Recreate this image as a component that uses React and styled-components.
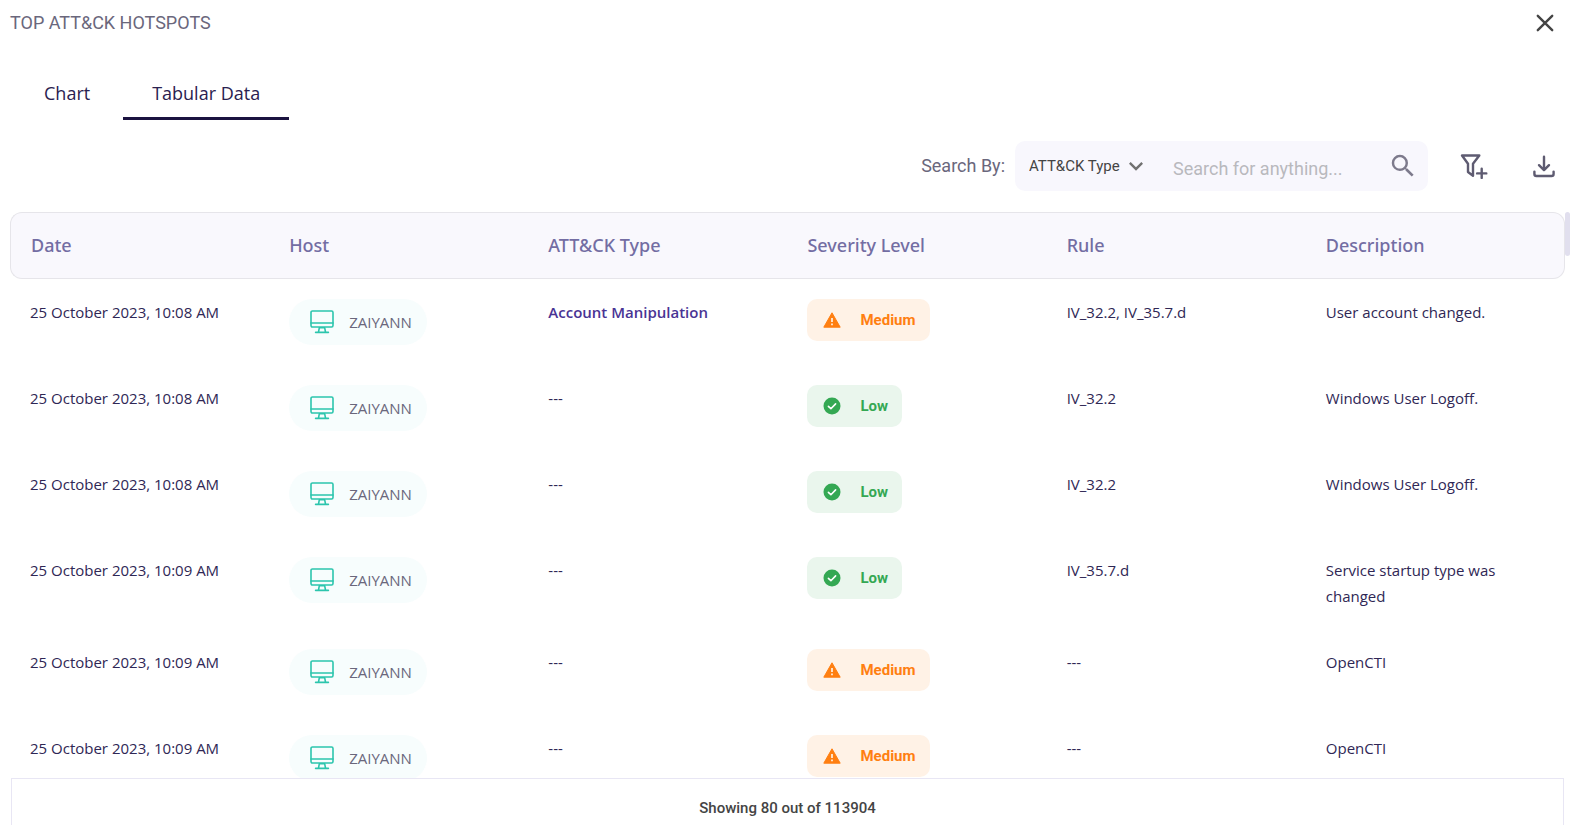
import React, { useState } from "react";
import styled, { createGlobalStyle } from "styled-components";
import { MdKeyboardArrowDown, MdSearch } from "react-icons/md";

const columns = [
  "Date",
  "Host",
  "ATT&CK Type",
  "Severity Level",
  "Rule",
  "Description",
];

const events = [
  {
    date: "25 October 2023, 10:08 AM",
    host: "ZAIYANN",
    type: "Account Manipulation",
    severity: "Medium",
    rule: "IV_32.2, IV_35.7.d",
    description: "User account changed.",
  },
  {
    date: "25 October 2023, 10:08 AM",
    host: "ZAIYANN",
    severity: "Low",
    rule: "IV_32.2",
    description: "Windows User Logoff.",
  },
  {
    date: "25 October 2023, 10:08 AM",
    host: "ZAIYANN",
    severity: "Low",
    rule: "IV_32.2",
    description: "Windows User Logoff.",
  },
  {
    date: "25 October 2023, 10:09 AM",
    host: "ZAIYANN",
    severity: "Low",
    rule: "IV_35.7.d",
    description: "Service startup type was changed",
  },
  {
    date: "25 October 2023, 10:09 AM",
    host: "ZAIYANN",
    severity: "Medium",
    description: "OpenCTI",
  },
  {
    date: "25 October 2023, 10:09 AM",
    host: "ZAIYANN",
    severity: "Medium",
    description: "OpenCTI",
  },
];

const CloseIcon = () => (
  <svg width="20" height="20" viewBox="0 0 20 20" fill="none" stroke="currentColor" strokeWidth="2.4" strokeLinecap="round">
    <path d="M2.8 2.8 17.2 17.2M17.2 2.8 2.8 17.2" />
  </svg>
);

const FilterAddIcon = () => (
  <svg width="28" height="26" viewBox="0 0 28 26" fill="none" stroke="currentColor" strokeWidth="2.4" strokeLinejoin="round">
    <path d="M2 2.5H19.3L13 10.8V22.8L8 19V10.8Z" />
    <path d="M21.7 15.8V25M17.1 20.4H26.3" strokeLinecap="round" />
  </svg>
);

const DownloadIcon = () => (
  <svg width="24" height="24" viewBox="0 0 24 24" fill="none" stroke="currentColor" strokeWidth="2.4" strokeLinecap="round" strokeLinejoin="round">
    <path d="M12 2.8V16M7 11.2 12 16.2 17 11.2" />
    <path d="M2.4 17.6V20Q2.4 22 4.4 22H19.6Q21.6 22 21.6 20V17.6" />
  </svg>
);

const MonitorIcon = () => (
  <svg width="24" height="24" viewBox="0 0 24 24" fill="none" stroke="#2cc5ad" strokeWidth="1.6" strokeLinecap="round" strokeLinejoin="round">
    <rect x="1" y="1" width="22" height="16" rx="1.4" />
    <path d="M1 13H23M9.3 17.8H14.7M9.3 17.8 8.5 22M14.7 17.8 15.5 22M5.6 22.4H18.4" />
  </svg>
);

const WarningIcon = () => (
  <svg width="18" height="18" viewBox="0 0 18 18">
    <path d="M9 1.8 17.2 16.2H.8Z" fill="#ff7f11" stroke="#ff7f11" strokeWidth="1" strokeLinejoin="round" />
    <path d="M9 7V11M9 12.4V14.2" stroke="#fff2e6" strokeWidth="1.7" />
  </svg>
);

const CheckIcon = () => (
  <svg width="18" height="18" viewBox="0 0 18 18">
    <circle cx="9" cy="9" r="8.5" fill="#34a853" />
    <path d="M5.4 9.3 7.9 11.7 12.6 6.9" fill="none" stroke="#fff" strokeWidth="1.6" strokeLinecap="round" strokeLinejoin="round" />
  </svg>
);

function App() {
  const [tab, setTab] = useState("Tabular Data");

  return (
    <>
      <GlobalStyle />
      <Panel>
        <PanelHeader>
          <h1>TOP ATT&amp;CK HOTSPOTS</h1>
          <CloseButton type="button" aria-label="Close">
            <CloseIcon />
          </CloseButton>
        </PanelHeader>

        <Tabs>
          {["Chart", "Tabular Data"].map((name) => (
            <Tab
              key={name}
              type="button"
              $active={tab === name}
              onClick={() => setTab(name)}
            >
              {name}
            </Tab>
          ))}
        </Tabs>

        <Toolbar>
          <SearchGroup>
            <label htmlFor="search-by">Search By:</label>
            <SearchBox>
              <SelectWrap>
                <select id="search-by" defaultValue="type">
                  <option value="type">ATT&amp;CK Type</option>
                </select>
                <MdKeyboardArrowDown size={28} />
              </SelectWrap>
              <SearchInput
                type="text"
                aria-label="Search"
                placeholder="Search for anything..."
              />
              <SearchButton type="button" aria-label="Search">
                <MdSearch size={30} />
              </SearchButton>
            </SearchBox>
          </SearchGroup>
          <ToolButton type="button" aria-label="Add filter">
            <FilterAddIcon />
          </ToolButton>
          <ToolButton type="button" aria-label="Download">
            <DownloadIcon />
          </ToolButton>
        </Toolbar>

        <TableArea>
          <Table>
            <thead>
              <tr>
                {columns.map((column) => (
                  <th key={column} scope="col">
                    {column}
                  </th>
                ))}
              </tr>
            </thead>
            <tbody>
              {events.map((event, index) => (
                <tr key={index}>
                  <td>{event.date}</td>
                  <td>
                    <HostPill>
                      <MonitorIcon />
                      {event.host}
                    </HostPill>
                  </td>
                  <td>
                    {event.type ? <AttackType>{event.type}</AttackType> : "---"}
                  </td>
                  <td>
                    <SeverityBadge $level={event.severity}>
                      {event.severity === "Low" ? <CheckIcon /> : <WarningIcon />}
                      {event.severity}
                    </SeverityBadge>
                  </td>
                  <td>{event.rule || "---"}</td>
                  <td>{event.description}</td>
                </tr>
              ))}
            </tbody>
          </Table>
          <ScrollThumb />
        </TableArea>

        <Footer>Showing 80 out of 113904</Footer>
      </Panel>
    </>
  );
}

const GlobalStyle = createGlobalStyle`
  * {
    box-sizing: border-box;
  }

  body {
    margin: 0;
    background: #fff;
    font-family: "Open Sans", sans-serif;
  }

  button {
    padding: 0;
    border: none;
    background: none;
    cursor: pointer;
  }
`;

const Panel = styled.main`
  display: flex;
  flex-direction: column;
  height: 100vh;
  overflow: hidden;
`;

const PanelHeader = styled.header`
  display: flex;
  align-items: center;
  justify-content: space-between;
  height: 46px;
  padding: 0 21px 0 10px;

  h1 {
    margin: 0;
    color: #6a677c;
    font: 400 18px/24px Roboto, sans-serif;
  }
`;

const CloseButton = styled.button`
  display: flex;
  color: #444;
`;

const Tabs = styled.nav`
  display: flex;
  gap: 4px;
  padding: 20px 15px 0;
`;

const Tab = styled.button`
  padding: 15px 29px 11px;
  border-bottom: 3px solid ${({ $active }) => ($active ? "#1b1340" : "transparent")};
  color: #2a2150;
  font: 400 18px/25px "Open Sans", sans-serif;
`;

const Toolbar = styled.div`
  display: flex;
  align-items: center;
  justify-content: flex-end;
  gap: 22px;
  padding: 21px 8px;
`;

const SearchGroup = styled.div`
  display: flex;
  align-items: center;
  gap: 10px;

  label {
    color: #6a677c;
    font: 400 18px/24px Roboto, sans-serif;
  }
`;

const SearchBox = styled.div`
  display: flex;
  align-items: center;
  width: 413px;
  height: 50px;
  padding: 0 10px 0 14px;
  border-radius: 10px;
  background: #f8f7fd;
`;

const SelectWrap = styled.div`
  display: flex;
  align-items: center;
  flex: none;
  width: 144px;

  select {
    appearance: none;
    width: 93px;
    padding: 0;
    border: none;
    outline: none;
    background: none;
    color: #444;
    font: 400 15px/24px Roboto, sans-serif;
  }

  svg {
    flex: none;
    color: #717171;
    pointer-events: none;
  }
`;

const SearchInput = styled.input`
  flex: 1;
  min-width: 0;
  padding: 6px 0 0;
  border: none;
  outline: none;
  background: none;
  color: #444;
  font: 400 18px/24px Roboto, sans-serif;

  &::placeholder {
    color: #b9b9bd;
  }
`;

const SearchButton = styled.button`
  display: flex;
  color: #7d7a8c;
`;

const ToolButton = styled.button`
  display: flex;
  align-items: center;
  justify-content: center;
  width: 48px;
  height: 48px;
  color: #5e5b71;
`;

const TableArea = styled.section`
  display: flex;
  align-items: flex-start;
  flex: 1;
  min-height: 0;
  padding: 0 6px 0 10px;
  overflow: hidden;
`;

const Table = styled.table`
  width: 100%;
  table-layout: fixed;
  border-collapse: separate;
  border-spacing: 0;

  th {
    height: 67px;
    padding: 0 20px 2px;
    border: 1px solid #e6e5ea;
    border-width: 1px 0;
    background: #f9f8fd;
    color: #736da3;
    font-family: "Noto Sans", sans-serif;
    font-size: 18px;
    font-weight: 500;
    text-align: left;
  }

  th:first-child {
    border-left-width: 1px;
    border-radius: 12px 0 0 12px;
  }

  th:last-child {
    border-right-width: 1px;
    border-radius: 0 12px 12px 0;
  }

  td {
    padding: 20px;
    color: #2f2755;
    font-size: 15px;
    line-height: 26px;
    vertical-align: top;
  }
`;

const HostPill = styled.div`
  display: flex;
  align-items: center;
  gap: 15px;
  width: fit-content;
  height: 46px;
  padding: 0 15px 0 21px;
  border-radius: 23px;
  background: #f7fdfd;
  color: #6a677c;
`;

const AttackType = styled.span`
  color: #493494;
  font-weight: 600;
`;

const SeverityBadge = styled.div`
  display: flex;
  align-items: center;
  gap: 19px;
  width: fit-content;
  height: 42px;
  padding: 0 14px 0 16px;
  border-radius: 10px;
  background: ${({ $level }) => ($level === "Low" ? "#eaf6ed" : "#fff2e6")};
  color: ${({ $level }) => ($level === "Low" ? "#34a853" : "#ff7f11")};
  font-family: Roboto, sans-serif;
  font-weight: 700;
`;

const ScrollThumb = styled.div`
  flex: none;
  width: 5px;
  height: 44px;
  border-radius: 3px;
  background: #e1dfee;
`;

const Footer = styled.footer`
  flex: none;
  height: 47px;
  margin: 0 12px 0 11px;
  padding-top: 19px;
  border: 1px solid #e8e6f4;
  border-bottom: none;
  color: #444;
  font: 500 15px/20px Roboto, sans-serif;
  text-align: center;
`;

export default App;
